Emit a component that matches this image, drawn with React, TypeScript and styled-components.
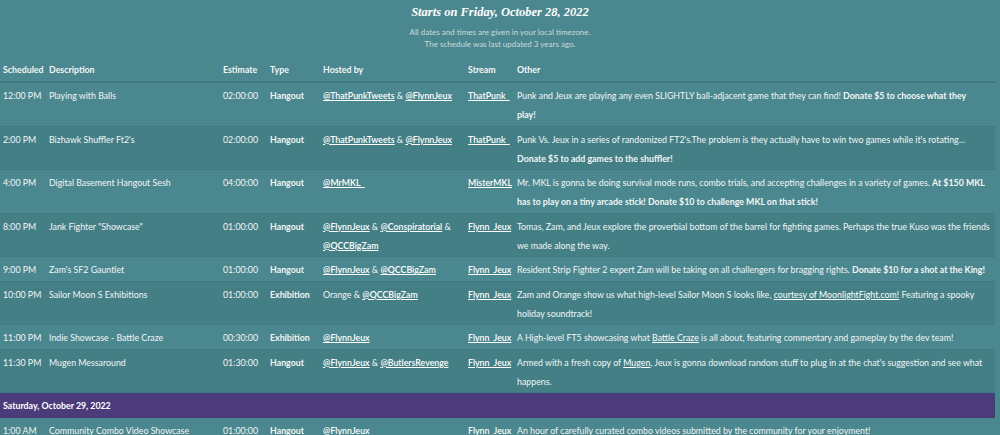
import React from "react";
import styled, { createGlobalStyle } from "styled-components";

type Part = { text: string; bold?: boolean; link?: boolean; br?: boolean };

interface Run {
  time: string;
  title: string;
  estimate: string;
  type: string;
  hosts: Part[];
  stream: string;
  other: Part[];
}

interface Day {
  label?: string;
  runs: Run[];
}

const link = (text: string): Part => ({ text, link: true });
const plain = (text: string): Part => ({ text });
const bold = (text: string): Part => ({ text, bold: true });
const br: Part = { text: "", br: true };

const days: Day[] = [
  {
    runs: [
      {
        time: "12:00 PM",
        title: "Playing with Balls",
        estimate: "02:00:00",
        type: "Hangout",
        hosts: [link("@ThatPunkTweets"), plain(" & "), link("@FlynnJeux")],
        stream: "ThatPunk_",
        other: [
          plain("Punk and Jeux are playing any even SLIGHTLY ball-adjacent game that they can find! "),
          bold("Donate $5 to choose what they"),
          br,
          bold("play!"),
        ],
      },
      {
        time: "2:00 PM",
        title: "Bizhawk Shuffler Ft2's",
        estimate: "02:00:00",
        type: "Hangout",
        hosts: [link("@ThatPunkTweets"), plain(" & "), link("@FlynnJeux")],
        stream: "ThatPunk_",
        other: [
          plain(
            "Punk Vs. Jeux in a series of randomized FT2's.The problem is they actually have to win two games while it's rotating... "
          ),
          bold("Donate $5 to add games to the shuffler!"),
        ],
      },
      {
        time: "4:00 PM",
        title: "Digital Basement Hangout Sesh",
        estimate: "04:00:00",
        type: "Hangout",
        hosts: [link("@MrMKL_")],
        stream: "MisterMKL",
        other: [
          plain(
            "Mr. MKL is gonna be doing survival mode runs, combo trials, and accepting challenges in a variety of games. "
          ),
          bold("At $150 MKL has to play on a tiny arcade stick! Donate $10 to challenge MKL on that stick!"),
        ],
      },
      {
        time: "8:00 PM",
        title: 'Jank Fighter "Showcase"',
        estimate: "01:00:00",
        type: "Hangout",
        hosts: [
          link("@FlynnJeux"),
          plain(" & "),
          link("@Conspiratorial"),
          plain(" & "),
          link("@QCCBigZam"),
        ],
        stream: "Flynn_Jeux",
        other: [
          plain(
            "Tomas, Zam, and Jeux explore the proverbial bottom of the barrel for fighting games. Perhaps the true Kuso was the friends we made along the way."
          ),
        ],
      },
      {
        time: "9:00 PM",
        title: "Zam's SF2 Gauntlet",
        estimate: "01:00:00",
        type: "Hangout",
        hosts: [link("@FlynnJeux"), plain(" & "), link("@QCCBigZam")],
        stream: "Flynn_Jeux",
        other: [
          plain("Resident Strip Fighter 2 expert Zam will be taking on all challengers for bragging rights. "),
          bold("Donate $10 for a shot at the King!"),
        ],
      },
      {
        time: "10:00 PM",
        title: "Sailor Moon S Exhibitions",
        estimate: "01:00:00",
        type: "Exhibition",
        hosts: [plain("Orange & "), link("@QCCBigZam")],
        stream: "Flynn_Jeux",
        other: [
          plain("Zam and Orange show us what high-level Sailor Moon S looks like, "),
          link("courtesy of MoonlightFight.com!"),
          plain(" Featuring a spooky holiday soundtrack!"),
        ],
      },
      {
        time: "11:00 PM",
        title: "Indie Showcase - Battle Craze",
        estimate: "00:30:00",
        type: "Exhibition",
        hosts: [link("@FlynnJeux")],
        stream: "Flynn_Jeux",
        other: [
          plain("A High-level FT5 showcasing what "),
          link("Battle Craze"),
          plain(" is all about, featuring commentary and gameplay by the dev team!"),
        ],
      },
      {
        time: "11:30 PM",
        title: "Mugen Messaround",
        estimate: "01:30:00",
        type: "Hangout",
        hosts: [link("@FlynnJeux"), plain(" & "), link("@ButlersRevenge")],
        stream: "Flynn_Jeux",
        other: [
          plain("Armed with a fresh copy of "),
          link("Mugen"),
          plain(", Jeux is gonna download random stuff to plug in at the chat's suggestion and see what happens."),
        ],
      },
    ],
  },
  {
    label: "Saturday, October 29, 2022",
    runs: [
      {
        time: "1:00 AM",
        title: "Community Combo Video Showcase",
        estimate: "01:00:00",
        type: "Hangout",
        hosts: [link("@FlynnJeux")],
        stream: "Flynn_Jeux",
        other: [plain("An hour of carefully curated combo videos submitted by the community for your enjoyment!")],
      },
    ],
  },
];

const GlobalStyle = createGlobalStyle`
  html, body {
    margin: 0;
    padding: 0;
    background: #4b878e;
    overflow: hidden;
  }
  body {
    font-family: Lato, "Open Sans", sans-serif;
    color: #f2f6f6;
  }
`;

const Page = styled.div`
  width: 1000px;
  height: 435px;
  overflow: hidden;
`;

const Intro = styled.header`
  display: flex;
  flex-direction: column;
  align-items: center;
  padding-top: 4px;
`;

const Heading = styled.h1`
  margin: 0;
  font-family: "Liberation Serif", serif;
  font-style: italic;
  font-weight: 700;
  font-size: 12.5px;
  line-height: 17px;
  color: #ffffff;
`;

const Note = styled.p`
  margin: 0;
  font-size: 8px;
  line-height: 12px;
  color: #c9dcdd;
  text-align: center;

  &:first-of-type {
    margin-top: 5px;
  }
`;

const Table = styled.table`
  width: 995px;
  margin-top: 9px;
  border-collapse: collapse;
  table-layout: fixed;
  font-size: 8.8px;
`;

const HeadCell = styled.th`
  text-align: left;
  font-weight: 700;
  padding: 4px 3px 5px;
  line-height: 13px;
  white-space: nowrap;
  border-bottom: 2px solid #3f7a80;
`;

const Row = styled.tr<{ $dark?: boolean }>`
  background: ${({ $dark }) => ($dark ? "#447f86" : "#4b878e")};
  border-bottom: 1px solid #3f7a80;
`;

const Cell = styled.td<{ $strong?: boolean; $nowrap?: boolean }>`
  vertical-align: top;
  padding: 3px 3px 1.5px;
  line-height: 19px;
  font-weight: ${({ $strong }) => ($strong ? 700 : 400)};
  white-space: ${({ $nowrap }) => ($nowrap ? "nowrap" : "normal")};
  color: #f2f6f6;
`;

const DayRow = styled.tr`
  background: #4b3b7b;
`;

const DayCell = styled.td`
  padding: 3px 3px 3px;
  line-height: 19px;
  font-weight: 700;
  color: #ffffff;
`;

const Link = styled.a`
  color: #ffffff;
  text-decoration: underline;
  font-weight: 600;
`;

const OtherLink = styled.a`
  color: #ffffff;
  text-decoration: underline;
`;

const Strong = styled.b`
  font-weight: 700;
`;

const Parts: React.FC<{ parts: Part[]; loose?: boolean }> = ({ parts, loose }) => (
  <>
    {parts.map((p, i) =>
      p.br ? (
        <br key={i} />
      ) : p.link ? (
        loose ? (
          <OtherLink key={i} href="#">
            {p.text}
          </OtherLink>
        ) : (
          <Link key={i} href="#">
            {p.text}
          </Link>
        )
      ) : p.bold ? (
        <Strong key={i}>{p.text}</Strong>
      ) : (
        <React.Fragment key={i}>{p.text}</React.Fragment>
      )
    )}
  </>
);

const columns = [
  { label: "Scheduled", width: 46 },
  { label: "Description", width: 174 },
  { label: "Estimate", width: 47 },
  { label: "Type", width: 53 },
  { label: "Hosted by", width: 145 },
  { label: "Stream", width: 49 },
  { label: "Other", width: 481 },
];

export default function App() {
  return (
    <Page>
      <GlobalStyle />
      <Intro>
        <Heading>Starts on Friday, October 28, 2022</Heading>
        <Note>All dates and times are given in your local timezone.</Note>
        <Note>The schedule was last updated 3 years ago.</Note>
      </Intro>
      <Table>
        <colgroup>
          {columns.map((c) => (
            <col key={c.label} style={{ width: c.width }} />
          ))}
        </colgroup>
        <thead>
          <tr>
            {columns.map((c) => (
              <HeadCell key={c.label}>{c.label}</HeadCell>
            ))}
          </tr>
        </thead>
        <tbody>
          {days.map((day, d) => (
            <React.Fragment key={d}>
              {day.label && (
                <DayRow>
                  <DayCell colSpan={7}>{day.label}</DayCell>
                </DayRow>
              )}
              {day.runs.map((run, i) => (
                <Row key={run.time + run.title} $dark={i % 2 === 1}>
                  <Cell $nowrap>{run.time}</Cell>
                  <Cell>{run.title}</Cell>
                  <Cell $nowrap>{run.estimate}</Cell>
                  <Cell $strong>{run.type}</Cell>
                  <Cell>
                    <Parts parts={run.hosts} />
                  </Cell>
                  <Cell $nowrap>
                    <Link href="#">{run.stream}</Link>
                  </Cell>
                  <Cell>
                    <Parts parts={run.other} loose />
                  </Cell>
                </Row>
              ))}
            </React.Fragment>
          ))}
        </tbody>
      </Table>
    </Page>
  );
}
